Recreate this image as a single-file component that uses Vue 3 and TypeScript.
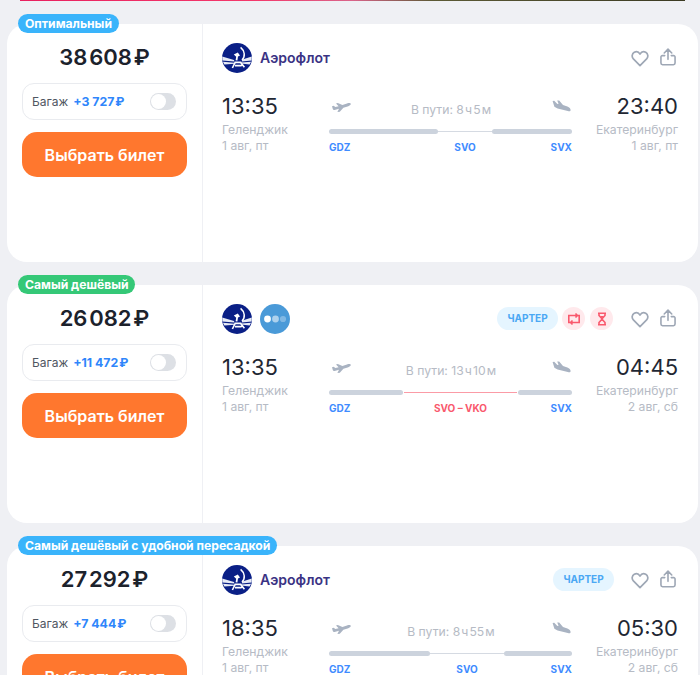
<script setup lang="ts">
interface Segment { width: number; thin: boolean; red: boolean; label: string }
interface Ticket {
  tag: string; tagGreen: boolean; price: string; bag: string; named: boolean; second: boolean;
  charter: boolean; warn: boolean; dep: string; arr: string; dur: string; arrDate: string; seg: Segment[];
}
const seg = (width: number, label: string, thin = false, red = false): Segment => ({ width, label, thin, red })
const tickets: Ticket[] = [
  { tag: 'Оптимальный', tagGreen: false, price: '38\u200A608\u200A₽', bag: '+3 727\u200A₽', named: true, second: false, charter: false, warn: false,
    dep: '13:35', arr: '23:40', dur: 'В пути: 8\u200Aч\u200A5\u200Aм', arrDate: '1 авг, пт',
    seg: [seg(109, 'GDZ'), seg(54, 'SVO', true), seg(80, 'SVX')] },
  { tag: 'Самый дешёвый', tagGreen: true, price: '26\u200A082\u200A₽', bag: '+11 472\u200A₽', named: false, second: true, charter: true, warn: true,
    dep: '13:35', arr: '04:45', dur: 'В пути: 13\u200Aч\u200A10\u200Aм', arrDate: '2 авг, сб',
    seg: [seg(74, 'GDZ'), seg(115, 'SVO – VKO', false, true), seg(54, 'SVX')] },
  { tag: 'Самый дешёвый с удобной пересадкой', tagGreen: false, price: '27\u200A292\u200A₽', bag: '+7 444\u200A₽', named: true, second: false, charter: true, warn: false,
    dep: '18:35', arr: '05:30', dur: 'В пути: 8\u200Aч\u200A55\u200Aм', arrDate: '2 авг, сб',
    seg: [seg(101, 'GDZ'), seg(74, 'SVO', true), seg(68, 'SVX')] },
]
const cols = (t: Ticket) => t.seg.map((s) => `${s.width}fr`).join(' ')
</script>

<template>
  <div class="page">
    <div class="strip"></div>
    <article v-for="t in tickets" :key="t.tag" class="card">
      <span class="tag" :class="{ green: t.tagGreen }">{{ t.tag }}</span>
      <aside class="buy">
        <div class="price">{{ t.price }}</div>
        <div class="bag">
          <span class="bag-label">Багаж</span>
          <span class="bag-price">{{ t.bag }}</span>
          <span class="toggle"><i></i></span>
        </div>
        <button class="choose" type="button">Выбрать билет</button>
      </aside>
      <section class="info">
        <header class="head">
          <svg class="logo" viewBox="0 0 30 30">
            <circle cx="15" cy="15" r="15" fill="#0a1f86" />
            <path d="M0.2 13.6 L12 17 L12.4 18.6 L0.4 17.6 Z M0.9 18.8 L12.6 19.8 L12.6 20.8 L2.4 21.6 Z" fill="#e6eaf5" />
            <path d="M29.8 13.6 L20.4 16.6 L19.6 18.4 L29.6 17.6 Z M29.1 18.8 L19.2 19.6 L19 20.6 L27.6 21.6 Z" fill="#e6eaf5" />
            <path d="M11.8 11.6 L15.8 9.4 L18 12.4 L16 13.4 L15.4 17.4 L13.6 17.2 L14.2 13.8 Z" fill="#fff" />
            <path d="M18.6 4.4 C23 8 23.4 13.6 20 17" fill="none" stroke="#fff" stroke-width="1.5" />
            <path d="M10.4 25 L13.2 19.4 L18.6 19.4 L22.4 24.2 M13 22.6 L19.6 22.6" fill="none" stroke="#fff" stroke-width="1.6" />
          </svg>
          <span v-if="t.named" class="airline">Аэрофлот</span>
          <svg v-if="t.second" class="logo second" viewBox="0 0 30 30">
            <circle cx="15" cy="15" r="15" fill="#4a9ad8" />
            <circle cx="7.5" cy="15" r="3.4" fill="#fff" />
            <circle cx="15.5" cy="15" r="3.4" fill="#fff" opacity=".55" />
            <circle cx="23" cy="15" r="3.1" fill="#fff" opacity=".3" />
          </svg>
          <div class="actions">
            <span v-if="t.charter" class="charter">ЧАРТЕР</span>
            <span v-if="t.warn" class="warn">
              <svg viewBox="0 0 14 14" fill="none" stroke="#f9596d" stroke-width="1.6">
                <path d="M3 10.5 H1.8 V3.5 H10 M8.5 1.5 L10.5 3.5 L8.5 5.5" />
                <path d="M11 3.5 H12.2 V10.5 H4 M5.5 8.5 L3.5 10.5 L5.5 12.5" />
              </svg>
            </span>
            <span v-if="t.warn" class="warn">
              <svg viewBox="0 0 14 14" fill="none" stroke="#f9596d" stroke-width="1.6">
                <path d="M3 1.2 H11 M3 12.8 H11" />
                <path d="M4 1.5 V3.5 L7 6.8 L10 3.5 V1.5 M4 12.5 V10.5 L7 7.2 L10 10.5 V12.5" />
                <path d="M5 4 H9 L7 6.5 Z" fill="#f9596d" stroke="none" />
              </svg>
            </span>
            <svg class="heart" viewBox="0 0 20 19" fill="none" stroke="#9ea7b5" stroke-width="1.9" stroke-linejoin="round">
              <path d="M10 17.5 L2.6 10 C0.4 7.6 1 4 3.6 2.6 C6 1.4 8.6 2.2 10 4.6 C11.4 2.2 14 1.4 16.4 2.6 C19 4 19.6 7.6 17.4 10 Z" />
            </svg>
            <svg class="share" viewBox="0 0 17 19" fill="none" stroke="#9ea7b5" stroke-width="1.7" stroke-linecap="round" stroke-linejoin="round">
              <path d="M8.5 12 V1.5 M4.5 5.2 L8.5 1.2 L12.5 5.2" />
              <path d="M5 8 H2.6 A1.5 1.5 0 0 0 1 9.5 V16 A1.7 1.7 0 0 0 2.7 17.7 H14.3 A1.7 1.7 0 0 0 16 16 V9.5 A1.5 1.5 0 0 0 14.4 8 H12" />
            </svg>
          </div>
        </header>
        <div class="route">
          <div class="point">
            <div class="time">{{ t.dep }}</div>
            <div class="sub">Геленджик</div>
            <div class="sub">1 авг, пт</div>
          </div>
          <div class="mid">
            <div class="top">
              <svg class="plane" viewBox="0 0 20 13" fill="#a9b3c2">
                <path d="M1 6.2 L2.6 5.8 L4.4 7 L7.6 6.2 L5 3.6 L6.8 3 L11.4 5 L16 3.4 C18 2.8 19.8 3 19.8 4 C19.8 5 18.4 5.8 16.6 6.4 L12.4 7.8 L8.8 11.8 L6.4 12 L8 8.8 L3.6 10 C2.6 10.2 2 9.8 1.8 9 Z" />
              </svg>
              <span class="dur">{{ t.dur }}</span>
              <svg class="plane" viewBox="0 0 20 13" fill="#a9b3c2">
                <path d="M1.6 1 L3.2 0.8 L6.4 4 L7.6 3.8 L6.2 0.4 L8.2 0.4 L12 5 L16.4 6.6 C18.4 7.4 19.6 8.6 19.6 10 C19.6 11.4 18.4 11.4 16.8 11 L6.6 8.6 L3.4 6.8 Z" />
              </svg>
            </div>
            <div class="bars" :style="{ gridTemplateColumns: cols(t) }">
              <template v-for="s in t.seg" :key="s.label">
                <span class="bar" :class="{ thin: s.thin, red: s.red }"></span>
              </template>
            </div>
            <div class="codes" :style="{ gridTemplateColumns: cols(t) }">
              <span v-for="s in t.seg" :key="s.label" :class="{ red: s.red }">{{ s.label }}</span>
            </div>
          </div>
          <div class="point end">
            <div class="time">{{ t.arr }}</div>
            <div class="sub">Екатеринбург</div>
            <div class="sub">{{ t.arrDate }}</div>
          </div>
        </div>
      </section>
    </article>
  </div>
</template>

<style>
html, body { margin: 0; background: #eff0f4; overflow: hidden; }
</style>

<style scoped>
.page {
  height: 675px; overflow: hidden; box-sizing: border-box; padding: 0 2px 0 7px;
  display: flex; flex-direction: column; gap: 23px;
  font-family: Inter, "Noto Sans", sans-serif; color: #1d2430; background: #eff0f4;
}
.strip {
  height: 1px; margin: 0 13px 0 13px; flex: none;
  background: linear-gradient(90deg, #e8205f 0, #f4386b 35%, #d9648a 50%, #5c5a35 62%, #3b3a22 100%);
}
.card { position: relative; flex: none; height: 238px; display: flex; background: #fff; border-radius: 20px; }
.tag {
  position: absolute; left: 11px; top: -10px; height: 19px; padding: 0 7px; border-radius: 10px;
  background: #3ab4fb; color: #fff; font-size: 12.15px; font-weight: 700; line-height: 19px; white-space: nowrap;
}
.tag.green { background: #35c877; }
.buy { width: 196px; flex: none; box-sizing: border-box; padding: 18px 15px 0; border-right: 1px solid #eff0f4; }
.price { height: 30px; font-size: 22px; font-weight: 600; line-height: 30px; text-align: center; color: #1c222c; }
.bag {
  display: flex; align-items: center; height: 37px; margin-top: 11px; box-sizing: border-box;
  padding: 0 10px 0 9px; border: 1px solid #e9ebef; border-radius: 12px; font-size: 12px; width: 165px;
}
.bag-label { color: #4f5662; }
.bag-price { margin-left: 5px; color: #2f86fb; font-size: 12.3px; font-weight: 700; white-space: nowrap; }
.toggle { margin-left: auto; width: 26px; height: 17px; border-radius: 9px; background: #dde0e5; display: flex; align-items: center; padding-left: 1px; box-sizing: border-box; }
.toggle i { display: block; width: 15px; height: 15px; border-radius: 50%; background: #fff; }
.choose {
  display: block; width: 165px; height: 45px; margin-top: 12px; border: 0; border-radius: 15px; padding: 0;
  background: #ff772e; color: #fff; font: 600 16px Inter, sans-serif;
}
.info { flex: 1; min-width: 0; box-sizing: border-box; padding: 18px 20px 0 19px; }
.head { display: flex; align-items: center; height: 31px; }
.logo { width: 30px; height: 30px; flex: none; }
.logo.second { margin-left: 8px; }
.airline { margin-left: 8px; font-size: 14px; font-weight: 600; color: #3a3384; }
.actions { margin-left: auto; display: flex; align-items: center; }
.charter {
  display: block; height: 23px; width: 61px; border-radius: 12px; background: #e5f5ff; color: #4ba8f4;
  font-size: 10px; font-weight: 700; line-height: 23px; text-align: center; margin-right: 4px;
}
.warn { width: 23px; height: 23px; border-radius: 50%; background: #ffe9ec; display: flex; align-items: center; justify-content: center; margin-right: 5px; }
.warn svg { width: 14px; height: 14px; }
.heart { width: 18px; height: 17px; margin: 1px 11px 0 13px; }
.share { width: 16px; height: 18px; margin-top: -2px; margin-right: 2px; }
.route { display: grid; grid-template-columns: 107px 243px 106px; margin-top: 19px; }
.time { font-size: 22px; line-height: 28px; font-weight: 400; color: #1f2733; }
.sub { font-size: 12.2px; line-height: 16px; color: #b6bbc5; white-space: nowrap; }
.time + .sub { margin-top: 2px; }
.end { text-align: right; }
.top { display: flex; justify-content: space-between; align-items: center; height: 30px; padding: 0 1px 0 2px; margin-top: -1px; }
.plane { width: 20px; height: 13px; flex: none; }
.dur { font-size: 12.2px; color: #b6bbc5; margin-top: 6px; white-space: nowrap; }
.bars { display: grid; align-items: center; height: 5px; margin-top: 8px; column-gap: 0; }
.bar { display: block; height: 5px; border-radius: 3px; background: #ccd3dd; }
.bar.thin { height: 1px; border-radius: 0; background: #d5dae2; }
.bar.red { height: 1.5px; border-radius: 0; background: #fb9ba6; margin: 0 1px; }
.codes { display: grid; margin-top: 6px; font-size: 10px; font-weight: 700; line-height: 14px; color: #3f8cff; }
.codes span { text-align: center; white-space: nowrap; }
.codes span:first-child { text-align: left; }
.codes span:last-child { text-align: right; }
.codes .red { color: #f9596d; }
</style>
